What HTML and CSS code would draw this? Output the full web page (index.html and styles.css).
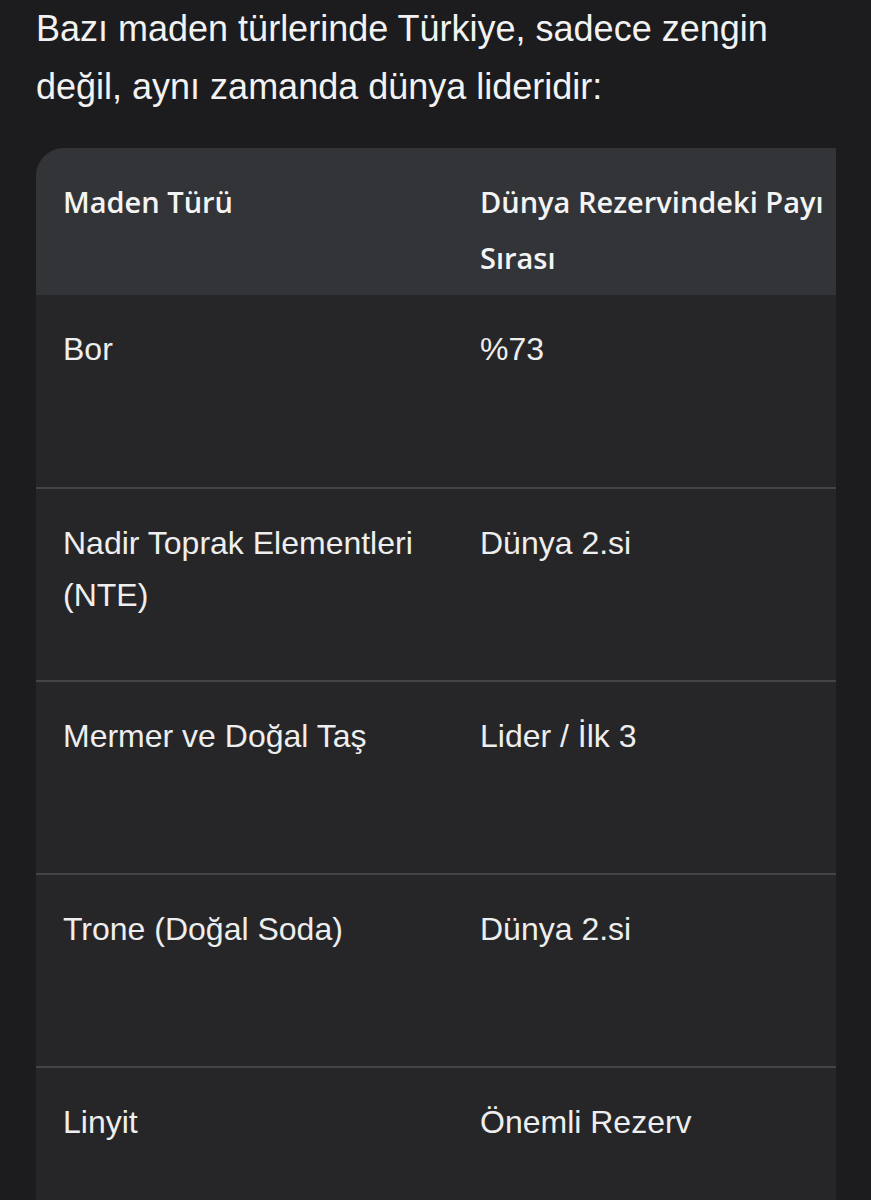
FILE: index.html
```html
<!DOCTYPE html>
<html lang="tr">
<head>
    <meta charset="UTF-8">
    <meta name="viewport" content="width=device-width, initial-scale=1.0">
    <title>Maden Türleri</title>
    <link rel="stylesheet" href="styles.css">
</head>
<body>

    <p class="intro">Bazı maden türlerinde Türkiye, sadece zengin değil, aynı zamanda dünya lideridir:</p>

    <table class="maden">
        <thead>
            <tr>
                <th>Maden Türü</th>
                <th>Dünya Rezervindeki Payı Sırası</th>
            </tr>
        </thead>
        <tbody>
            <tr>
                <td>Bor</td>
                <td>%73</td>
            </tr>
            <tr>
                <td>Nadir Toprak Elementleri (NTE)</td>
                <td>Dünya 2.si</td>
            </tr>
            <tr>
                <td>Mermer ve Doğal Taş</td>
                <td>Lider / İlk 3</td>
            </tr>
            <tr>
                <td>Trone (Doğal Soda)</td>
                <td>Dünya 2.si</td>
            </tr>
            <tr>
                <td>Linyit</td>
                <td>Önemli Rezerv</td>
            </tr>
        </tbody>
    </table>

</body>
</html>
```

FILE: styles.css
```css
* {
    margin: 0;
    padding: 0;
    box-sizing: border-box;
}

body {
    background: #1c1c1e;
    color: #f2f2f3;
    font-family: "Liberation Sans", Arial, sans-serif;
    padding: 0 36px;
    min-height: 100vh;
    overflow: hidden;
}

.intro {
    font-size: 36px;
    line-height: 58px;
    margin-bottom: 32px;
}

/* 表格右边被截断，只露出两列 */
.maden {
    width: 800px;
    table-layout: fixed;
    border-collapse: collapse;
    background: #262628;
    border-top-left-radius: 28px;
    overflow: hidden;
}

.maden th,
.maden td {
    text-align: left;
    vertical-align: top;
    padding: 0 27px;
}

.maden th:first-child,
.maden td:first-child {
    width: 417px;
}

.maden th:last-child,
.maden td:last-child {
    padding-right: 0;
}

.maden thead tr {
    background: #333437;
    height: 147px;
}

.maden th {
    font-family: "Open Sans", "Liberation Sans", sans-serif;
    font-weight: 600;
    font-size: 29px;
    line-height: 56px;
    padding-top: 26px;
    color: #f4f4f5;
}

.maden tbody tr {
    height: 193px;
    border-top: 2px solid #444447;
}

.maden tbody tr:first-child {
    border-top: none;
}

.maden td {
    font-size: 32px;
    line-height: 52px;
    padding-top: 28px;
    color: #eeeeef;
}
```
